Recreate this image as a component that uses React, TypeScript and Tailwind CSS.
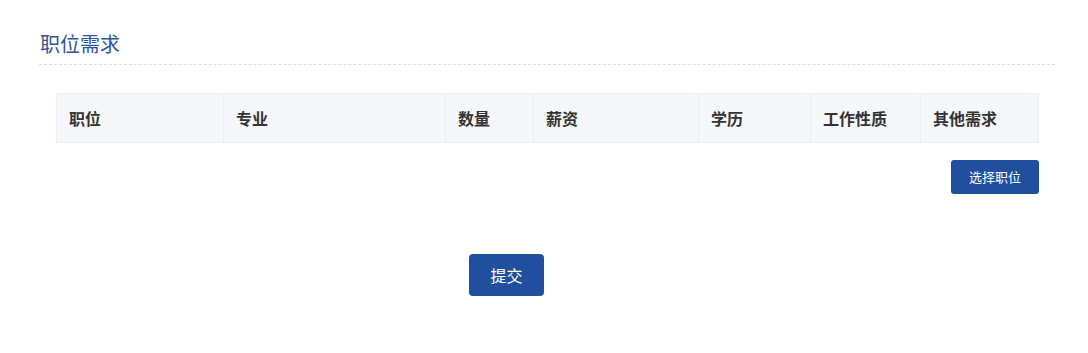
const columns = [
  { label: '职位', width: 'w-[167px]' },
  { label: '专业', width: 'w-[222px]' },
  { label: '数量', width: 'w-[88px]' },
  { label: '薪资', width: 'w-[165px]' },
  { label: '学历', width: 'w-[112px]' },
  { label: '工作性质', width: 'w-[110px]' },
  { label: '其他需求', width: 'flex-1' },
];

export default function App() {
  return (
    <div
      className="w-[1088px] h-[353px] bg-white"
      style={{ fontFamily: '"Noto Sans CJK SC", "Liberation Sans", sans-serif' }}
    >
      <div className="pl-[39px] pr-[33px] pt-[29px]">
        <h2 className="pl-px text-[20px] leading-[30px] text-[#2e5597] pb-[5px] border-b border-dashed border-[#dcdfe6]">
          职位需求
        </h2>
      </div>

      <div className="ml-[56px] w-[983px] mt-[28px]">
        {/* header of the job table */}
        <div className="flex h-[50px] bg-[#f5f7fa] border border-[#ebeef5]">
          {columns.map((col, i) => (
            <div
              key={col.label}
              className={`${col.width} flex items-center px-3 text-[16px] font-bold text-[#333] ${i < columns.length - 1 ? 'border-r border-[#ebeef5]' : ''}`}
            >
              {col.label}
            </div>
          ))}
        </div>

        <div className="flex justify-end mt-[17px]">
          <button className="w-[88px] h-[34px] rounded-[3px] bg-[#1f4f9d] text-white text-[13px]">
            选择职位
          </button>
        </div>
      </div>

      <div className="flex mt-[60px] pl-[469px]">
        <button className="w-[75px] h-[42px] rounded-[4px] bg-[#1f4f9d] text-white text-[16px]">
          提交
        </button>
      </div>
    </div>
  );
}
